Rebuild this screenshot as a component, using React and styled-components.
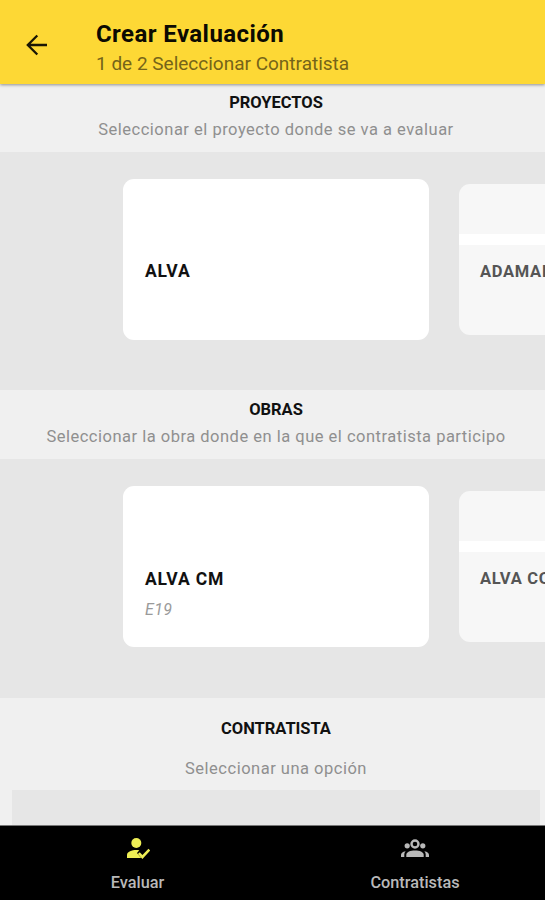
import React from 'react';
import styled, { createGlobalStyle } from 'styled-components';

const GlobalStyle = createGlobalStyle`
  * {
    box-sizing: border-box;
  }

  body {
    margin: 0;
    background-color: #f0f0f0;
    font-family: Roboto, "Liberation Sans", sans-serif;
  }
`;

const Screen = styled.div`
  display: flex;
  flex-direction: column;
  height: 900px;
  overflow: hidden;
  background-color: #f0f0f0;
`;

const AppBar = styled.header`
  display: flex;
  flex: none;
  height: 84px;
  padding-left: 24px;
  background-color: #fdd835;
  box-shadow: 0 1px 3px rgba(0, 0, 0, 0.4);
  z-index: 1;
`;

const BackButton = styled.button`
  width: 24px;
  height: 24px;
  margin: 33px 48px 0 0;
  padding: 0;
  border: none;
  background: none;
  cursor: pointer;
`;

const Titles = styled.div`
  padding-top: 20px;
`;

const Title = styled.h1`
  margin: 0;
  font-size: 24px;
  line-height: 29px;
  font-weight: 700;
  letter-spacing: 0.42px;
  color: #0c0a02;
`;

const Subtitle = styled.p`
  margin: 0;
  font-size: 19px;
  line-height: 29px;
  color: #756419;
`;

const Content = styled.main`
  flex: 1;
  min-height: 0;
  overflow: hidden;
`;

const SectionHeader = styled.div`
  height: ${props => props.height}px;
  padding: ${props => props.top}px 0 0 7px;
  text-align: center;
`;

const SectionTitle = styled.h2`
  margin: 0;
  font-size: 16.5px;
  line-height: 20px;
  font-weight: 700;
  letter-spacing: -0.03px;
  color: #111111;
`;

const SectionHint = styled.p`
  margin: ${props => props.gap}px 0 0;
  font-size: 16.5px;
  line-height: 20px;
  letter-spacing: 0.5px;
  white-space: nowrap;
  color: #8f8f8f;
`;

const Carousel = styled.div`
  display: flex;
  align-items: center;
  gap: 30px;
  height: ${props => props.height}px;
  padding: 0 0 ${props => props.bottom}px 123px;
  overflow: hidden;
  background-color: #e6e6e6;
`;

const Card = styled.div`
  flex: none;
  width: 306px;
  height: 161px;
  padding: ${props => props.top}px 22px 0;
  border-radius: 11px;
  background-color: #ffffff;
`;

const NextCard = styled.div`
  flex: none;
  width: 290px;
  height: 151px;
  border-radius: 11px;
  background-color: #f7f7f7;
  overflow: hidden;
`;

const Divider = styled.div`
  height: 11px;
  margin-top: 50px;
  background-color: #ffffff;
`;

const CardName = styled.div`
  font-size: 17.5px;
  line-height: 22px;
  font-weight: 700;
  letter-spacing: 0.85px;
  white-space: nowrap;
  color: #111111;
`;

const NextCardName = styled(CardName)`
  padding: 16px 0 0 21px;
  font-size: 16.5px;
  letter-spacing: 0.7px;
  color: #555555;
`;

const CardCode = styled.div`
  margin-top: 10px;
  font-size: 16px;
  line-height: 20px;
  font-style: italic;
  letter-spacing: 0.4px;
  color: #9a9a9a;
`;

const Picker = styled.div`
  height: 60px;
  margin: 0 5px 0 12px;
  background-color: #e6e6e6;
`;

const TabBar = styled.nav`
  display: flex;
  flex: none;
  height: 75px;
  border-top: 1px solid #777777;
  background-color: #000000;
`;

const Tab = styled.div`
  display: flex;
  flex: none;
  flex-direction: column;
  align-items: center;
  width: ${props => props.width}px;
  padding-top: 10px;
  font-size: 16.3px;
  line-height: 20px;
  font-weight: 500;
  color: #b9b9b9;

  svg {
    color: ${props => (props.active ? '#eeee55' : '#b9b9b9')};
  }
`;

const TabLabel = styled.span`
  margin-top: 13px;
`;

const BackArrow = () => (
  <svg width="24" height="24" viewBox="0 0 24 24" fill="none" stroke="#1a1604" strokeWidth="2.3">
    <path d="M23 12H4M13.3 2.5L3.8 12l9.5 9.5" />
  </svg>
);

const EvaluateIcon = () => (
  <svg width="24" height="24" viewBox="0 0 24 24" fill="currentColor">
    <circle cx="10.3" cy="7" r="5" />
    <path d="M1 22v-3c0-3.2 5-5 9.3-5 1 0 2 .1 3 .3l-2.3 2.6 4.2 5.1z" />
    <path d="M12.8 17.2l3.6 3.8 7-7.4" fill="none" stroke="currentColor" strokeWidth="2.6" />
  </svg>
);

const GroupIcon = () => (
  <svg width="30" height="24" viewBox="0 0 30 24" fill="currentColor">
    <circle cx="15" cy="8" r="3.5" fill="none" stroke="currentColor" strokeWidth="2.4" />
    <circle cx="7.2" cy="9.8" r="2.6" />
    <circle cx="22.8" cy="9.8" r="2.6" />
    <path d="M6.3 21v-2.2c0-2.8 4.2-4.3 8.7-4.3s8.7 1.5 8.7 4.3V21z" />
    <path d="M1 21v-2c0-1.7 1.4-3.2 4.7-3.7-.9 1-1.4 2.1-1.4 3.4V21zM29 21v-2c0-1.7-1.4-3.2-4.7-3.7.9 1 1.4 2.1 1.4 3.4V21z" />
  </svg>
);

const sections = [
  {
    title: 'PROYECTOS',
    hint: 'Seleccionar el proyecto donde se va a evaluar',
    headerHeight: 68,
    top: 9,
    carouselHeight: 238,
    bottom: 23,
    cardTop: 81,
    name: 'ALVA',
    next: 'ADAMANT',
  },
  {
    title: 'OBRAS',
    hint: 'Seleccionar la obra donde en la que el contratista participo',
    headerHeight: 69,
    top: 10,
    carouselHeight: 239,
    bottom: 24,
    cardTop: 82,
    name: 'ALVA CM',
    code: 'E19',
    next: 'ALVA CO',
  },
];

const App = () => {
  return (
    <Screen>
      <GlobalStyle />
      <AppBar>
        <BackButton aria-label="Volver">
          <BackArrow />
        </BackButton>
        <Titles>
          <Title>Crear Evaluación</Title>
          <Subtitle>1 de 2 Seleccionar Contratista</Subtitle>
        </Titles>
      </AppBar>

      <Content>
        {sections.map(section => (
          <section key={section.title}>
            <SectionHeader height={section.headerHeight} top={section.top}>
              <SectionTitle>{section.title}</SectionTitle>
              <SectionHint gap={7}>{section.hint}</SectionHint>
            </SectionHeader>
            <Carousel height={section.carouselHeight} bottom={section.bottom}>
              <Card top={section.cardTop}>
                <CardName>{section.name}</CardName>
                {section.code && <CardCode>{section.code}</CardCode>}
              </Card>
              <NextCard>
                <Divider />
                <NextCardName>{section.next}</NextCardName>
              </NextCard>
            </Carousel>
          </section>
        ))}

        <SectionHeader height={92} top={21}>
          <SectionTitle>CONTRATISTA</SectionTitle>
          <SectionHint gap={20}>Seleccionar una opción</SectionHint>
        </SectionHeader>
        <Picker />
      </Content>

      <TabBar>
        <Tab active width={275}>
          <EvaluateIcon />
          <TabLabel>Evaluar</TabLabel>
        </Tab>
        <Tab width={280}>
          <GroupIcon />
          <TabLabel>Contratistas</TabLabel>
        </Tab>
      </TabBar>
    </Screen>
  );
};

export default App;
